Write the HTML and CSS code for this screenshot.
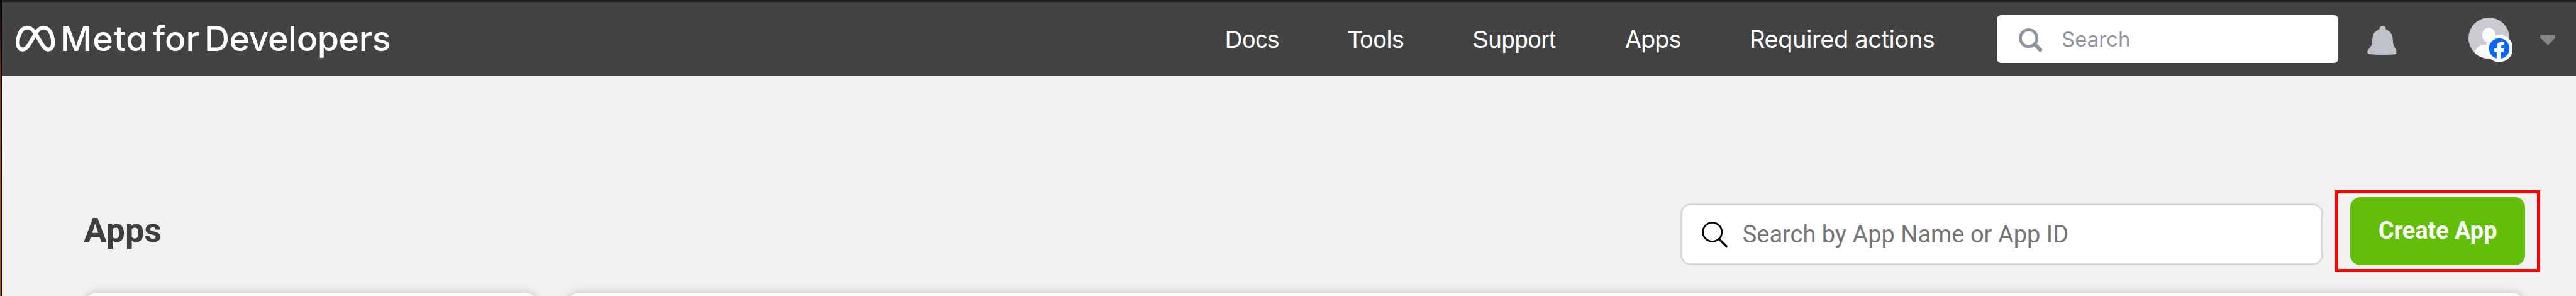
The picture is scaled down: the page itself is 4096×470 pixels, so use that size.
FILE: index.html
```html
<!DOCTYPE html>
<html lang="en">
<head>
<meta charset="utf-8">
<title>Meta for Developers</title>
<link rel="stylesheet" href="styles.css">
</head>
<body>
<div class="window">
  <div class="desktop-edge"></div>
  <div class="page">
    <header class="topbar">
      <a class="brand">
        <svg class="brand-mark" viewBox="0 0 92 62" fill="none" stroke="#fff" stroke-width="9">
          <path d="M27 5.5C13 5.5 4.7 24 4.7 41C4.7 51.500 9.500 57 16.500 57C23.500 57 28.500 50.500 35 39L47 19C52 10.500 57.500 5.500 65 5.500C78.500 5.500 87.300 22 87.300 41C87.300 51.500 83 57 76.500 57C69.500 57 65 51 58 39L46 19.500C40.500 10.500 35 5.500 27 5.500Z"/>
        </svg>
        <span class="word word-meta">Meta</span>
        <span class="word word-for">for</span>
        <span class="word word-dev">Developers</span>
      </a>
      <nav class="links">
        <a class="link link-docs">Docs</a>
        <a class="link link-tools">Tools</a>
        <a class="link link-support">Support</a>
        <a class="link link-apps">Apps</a>
        <a class="link link-required">Required actions</a>
      </nav>
      <div class="search">
        <svg class="search-icon" viewBox="0 0 56 56" fill="none" stroke="#8d949e">
          <circle cx="23" cy="23" r="19.500" stroke-width="7"/>
          <path d="M38 38L50.500 50.500" stroke-width="9" stroke-linecap="round"/>
        </svg>
        <span class="search-text">Search</span>
      </div>
      <svg class="bell" viewBox="0 0 68 68" fill="#bec3c9">
        <path d="M36 0C40.500 0 43 3 44 9.300C53 12 58.500 19 59.500 28C60.300 36 60 42 62.500 47.500C64 51 66.500 53 68 56V66C57 68.500 16 68.500 5 66C0 65 -1 60 2 56.500C7 50.500 10 48 11 41C12 35 12 31 12.500 27C13.500 18 19 11.500 28 9.300C29 3 31.500 0 36 0Z"/>
      </svg>
      <svg class="avatar" viewBox="0 0 104 104">
        <defs>
          <clipPath id="face"><circle cx="48" cy="48" r="48"/></clipPath>
          <linearGradient id="body" x1="0" y1="0" x2="0" y2="1">
            <stop offset="0" stop-color="#fff"/><stop offset="1" stop-color="#f0f1f4"/>
          </linearGradient>
        </defs>
        <g clip-path="url(#face)">
          <rect width="96" height="96" fill="#cbccd1"/>
          <ellipse cx="47.500" cy="41" rx="15.500" ry="17" fill="#fff"/>
          <path d="M14 84C17 70 26 64 38 64H58C70 64 80 72 82 84V100H14Z" fill="url(#body)"/>
        </g>
        <circle cx="72" cy="72" r="32" fill="#fff"/>
        <circle cx="72" cy="72" r="24" fill="#0866ff"/>
        <path d="M66 95.500V80H60V72H66V69C66 60 71 56.500 78 56.500C80 56.500 82.500 56.800 84 57.300V65C78 64 75.500 65 75.500 69.500V72H83.500L82 80H75.500V95.500Z" fill="#fff"/>
      </svg>
      <svg class="caret" viewBox="0 0 36 22" fill="#868686">
        <path d="M3 0H33C36.500 0 37 4 35 6.500L21 20.500C19 22.500 17 22.500 15 20.500L1 6.500C-1 4 -.5 0 3 0Z"/>
      </svg>
    </header>
    <main class="content">
      <div class="toolbar">
        <h1 class="title">Apps</h1>
        <div class="app-search">
          <svg class="app-search-icon" viewBox="0 0 60 60" fill="none" stroke="#000" stroke-width="4">
            <circle cx="24.500" cy="24" r="22"/>
            <path d="M40 40L58.500 58.500" stroke-width="5"/>
          </svg>
          <span class="app-search-text">Search by App Name or App ID</span>
        </div>
        <div class="highlight">
          <button class="create">Create App</button>
        </div>
      </div>
      <div class="cards">
        <section class="card"></section>
        <section class="card"></section>
      </div>
    </main>
  </div>
</div>
</body>
</html>
```

FILE: styles.css
```css
* { box-sizing: border-box; }
html, body { margin: 0; height: 470px; overflow: hidden; }
body { background: #f1f1f1; }

.window { display: flex; width: 4096px; height: 470px; overflow: hidden; }
.desktop-edge {
  flex: none;
  width: 3px;
  border-right: 1px solid #000;
  background: linear-gradient(#0b1020 0, #3a1720 60px, #7a3f0a 136px, #a06006 300px, #a56600 470px);
}
.page { flex: none; width: 4093px; }

/* Top bar */
.topbar {
  display: flex;
  align-items: center;
  height: 119.6px;
  border-top: 3px solid #1c1c1c;
  background: #434343;
}
.brand {
  display: flex;
  align-items: center;
  flex: none;
  width: 1944.7px;
  padding-left: 21.5px;
  color: #fff;
  font: 500 55.5px/68px Inter, sans-serif;
  font-feature-settings: "cv11";
}
.brand-mark { flex: none; width: 62.5px; height: 42px; }
.word { flex: none; }
.word-meta { width: 146.7px; margin-left: 8.7px; letter-spacing: 1px; }
.word-for { width: 82.5px; }
.word-dev { letter-spacing: -.45px; }

.links {
  display: grid;
  flex: none;
  grid-template-columns: 195.3px 198.3px 242.7px 198px 392.7px;
  color: #fff;
  font: 38px/48px Inter, sans-serif;
}
.link { white-space: nowrap; padding-top: 2px; }
.link-docs, .link-tools, .link-support { font-family: "Liberation Sans", Arial, sans-serif; padding-top: 3px; }
.link-tools { letter-spacing: .2px; }
.link-support { letter-spacing: -.15px; }
.link-apps { letter-spacing: -1.1px; }
.link-required { letter-spacing: -.39px; }

.search {
  display: flex;
  align-items: center;
  flex: none;
  width: 543.3px;
  height: 76px;
  margin-top: 2px;
  padding-left: 35.3px;
  border-radius: 7px;
  background: #fff;
  color: #8d949e;
  font: 33px/42px Inter, sans-serif;
}
.search-icon { width: 38px; height: 38px; margin-top: 4px; }
.search-text { margin-left: 30px; }

.bell { flex: none; width: 46.2px; height: 46.2px; margin: 5px 0 0 46.500px; }
.avatar { flex: none; width: 70.7px; height: 70.7px; margin: 5px 0 0 114px; }
.caret { flex: none; width: 24.5px; height: 15px; margin: 4px 0 0 43.500px; }

/* Content */
.content { padding-left: 130.2px; }
.toolbar {
  display: flex;
  align-items: flex-start;
  height: 163px;
  margin-top: 182.1px;
}
.title {
  width: 2538.5px;
  margin: 32px 0 0;
  color: #3e3e3e;
  font: bold 54px/64px Roboto, sans-serif;
}
.app-search {
  display: flex;
  align-items: center;
  width: 1022px;
  height: 98px;
  margin-top: 21.6px;
  padding-left: 31px;
  border: 3px solid #d9d9d9;
  border-radius: 16px;
  background: #fff;
  color: #757575;
  font: 38px/46px Roboto, sans-serif;
}
.app-search-icon { width: 41px; height: 41px; }
.app-search-text { margin-left: 24px; white-space: nowrap; }
.highlight {
  width: 326.2px;
  height: 130.5px;
  margin-left: 19px;
  padding: 6px 0 0 19.7px;
  border: 5px solid #f00;
}
.create {
  display: block;
  width: 277.3px;
  height: 108.7px;
  padding: 0 0 2px;
  border: 0;
  border-radius: 16px;
  background: #63be09;
  color: #fff;
  font: bold 38px/46px Roboto, sans-serif;
  letter-spacing: -.1px;
}

.cards { display: flex; gap: 43.5px; }
.card {
  flex: none;
  width: 723px;
  height: 120px;
  border-radius: 21.7px;
  background: #fff;
  box-shadow: 0 0 14px rgba(0, 0, 0, .2);
}
.card + .card { width: 3115px; }
```
